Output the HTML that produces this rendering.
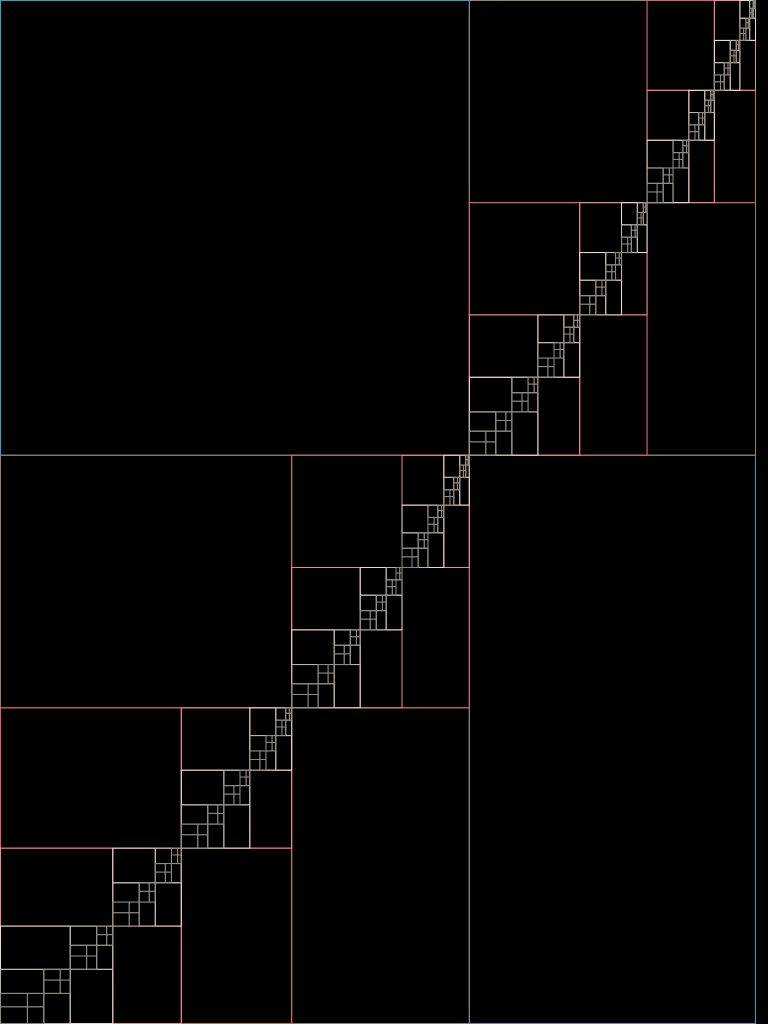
<!DOCTYPE html>
<html><head><meta charset="utf-8"><style>
html,body{margin:0;padding:0;background:#000;width:768px;height:1024px;overflow:hidden}
svg{display:block}
</style></head><body>
<svg id="s" width="768" height="1024" viewBox="0 0 768 1024" xmlns="http://www.w3.org/2000/svg"></svg>
<script>
var cols=["#3c9fbf","#9a7c78","#d9607a","#e88a9c","#ecdccc","#bdb4a6","#8f887e"];
var out=[];
function R(x,y,w,h,c){out.push('<rect x="'+(x+0.5).toFixed(2)+'" y="'+(y+0.5).toFixed(2)+'" width="'+w.toFixed(2)+'" height="'+h.toFixed(2)+'" fill="none" stroke="'+c+'" stroke-width="1"/>');}
function draw(x,y,w,h,d){
  var sx=w*0.621, sy=h*0.4445;
  var c=cols[d];
  var kids=[[x,y,sx,sy],[x+sx,y,w-sx,sy],[x,y+sy,sx,h-sy],[x+sx,y+sy,w-sx,h-sy]];
  kids.forEach(function(k){R(k[0],k[1],k[2],k[3],c);});
  if(d>=6) return;
  draw(x+sx,y,w-sx,sy,d+1);
  draw(x,y+sy,sx,h-sy,d+1);
}
draw(0,0,755,1023,0);
document.getElementById('s').innerHTML=out.join('');
</script>
</body></html>
